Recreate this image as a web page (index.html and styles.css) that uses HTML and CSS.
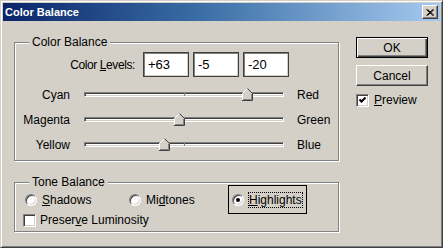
FILE: index.html
```html
<!DOCTYPE html>
<html lang="en">
<head>
  <meta charset="UTF-8">
  <title>Color Balance</title>
  <link rel="stylesheet" href="styles.css">
</head>
<body>
  <div class="window">
    <div class="titlebar">
      <span class="title">Color Balance</span>
      <span class="close">
        <svg width="8" height="7" viewBox="0 0 8 7"><path d="M0.5 0.5 L7 6.5 M1.5 0.5 L8 6.5 M7 0.5 L0.5 6.5 M8 0.5 L1.5 6.5" stroke="#000" stroke-width="1"/></svg>
      </span>
    </div>
    <div class="body">
      <div class="left">
        <div class="group balance">
          <span class="legend">Color Balance</span>
          <div class="levels">
            <span class="levels-label">Color <u>L</u>evels:</span>
            <span class="field">+63</span>
            <span class="field">-5</span>
            <span class="field">-20</span>
          </div>
          <div class="slider-row">
            <span class="slider-left">Cyan</span>
            <div class="track">
              <span class="tick"></span>
              <svg class="thumb" style="left: 157px" width="11" height="13" viewBox="0 0 11 13"><polygon points="5.5,0 11,5.5 11,13 0,13 0,5.5" fill="#d4d0c8"/><polyline points="0.5,12.5 0.5,5.5 5.5,0.5" fill="none" stroke="#fff"/><polyline points="5.5,0.5 10.5,5.5 10.5,12.5 0,12.5" fill="none" stroke="#404040"/><polyline points="9.5,6 9.5,11.5 1,11.5" fill="none" stroke="#808080"/></svg>
            </div>
            <span class="slider-right">Red</span>
          </div>
          <div class="slider-row">
            <span class="slider-left">Magenta</span>
            <div class="track">
              <span class="tick"></span>
              <svg class="thumb" style="left: 89px" width="11" height="13" viewBox="0 0 11 13"><polygon points="5.5,0 11,5.5 11,13 0,13 0,5.5" fill="#d4d0c8"/><polyline points="0.5,12.5 0.5,5.5 5.5,0.5" fill="none" stroke="#fff"/><polyline points="5.5,0.5 10.5,5.5 10.5,12.5 0,12.5" fill="none" stroke="#404040"/><polyline points="9.5,6 9.5,11.5 1,11.5" fill="none" stroke="#808080"/></svg>
            </div>
            <span class="slider-right">Green</span>
          </div>
          <div class="slider-row">
            <span class="slider-left">Yellow</span>
            <div class="track">
              <span class="tick"></span>
              <svg class="thumb" style="left: 74px" width="11" height="13" viewBox="0 0 11 13"><polygon points="5.5,0 11,5.5 11,13 0,13 0,5.5" fill="#d4d0c8"/><polyline points="0.5,12.5 0.5,5.5 5.5,0.5" fill="none" stroke="#fff"/><polyline points="5.5,0.5 10.5,5.5 10.5,12.5 0,12.5" fill="none" stroke="#404040"/><polyline points="9.5,6 9.5,11.5 1,11.5" fill="none" stroke="#808080"/></svg>
            </div>
            <span class="slider-right">Blue</span>
          </div>
        </div>

        <div class="group tone">
          <span class="legend">Tone Balance</span>
          <div class="radios">
            <label class="radio-item"><span class="radio"></span><span class="radio-text"><u>S</u>hadows</span></label>
            <label class="radio-item"><span class="radio"></span><span class="radio-text">Mi<u>d</u>tones</span></label>
            <label class="radio-item selected"><span class="radio checked"></span><span class="radio-text focus"><u>H</u>ighlights</span></label>
          </div>
          <label class="check-item preserve"><span class="checkbox"></span><span>Preser<u>v</u>e Luminosity</span></label>
        </div>
      </div>

      <div class="buttons">
        <div class="btn default">OK</div>
        <div class="btn">Cancel</div>
        <label class="check-item preview">
          <span class="checkbox">
            <svg width="7" height="7" viewBox="0 0 7 7"><polyline points="0.5,2.5 2.5,4.5 6.5,0.5" fill="none" stroke="#000" stroke-width="2"/></svg>
          </span>
          <span><u>P</u>review</span>
        </label>
      </div>
    </div>
  </div>
</body>
</html>
```

FILE: styles.css
```css
body {
  margin: 0;
  background: #d4d0c8;
  font-family: 'Liberation Sans', Arial, sans-serif;
  font-size: 12px;
  line-height: 14px;
  color: #000;
}

.window {
  width: 443px;
  height: 248px;
  box-sizing: border-box;
  border: 1px solid;
  border-color: #d4d0c8 #404040 #404040 #d4d0c8;
  box-shadow: inset 1px 1px #fff, inset -1px -1px #808080;
  padding: 2px;
  background: #d4d0c8;
}

.titlebar {
  height: 18px;
  display: flex;
  align-items: center;
  justify-content: space-between;
  padding: 0 2px 0 2px;
  background: linear-gradient(90deg, #0a246a 0%, #3a6ea5 45%, #a6caf0 100%);
}

.title {
  color: #fff;
  font-weight: bold;
  font-size: 11px;
}

.close {
  width: 16px;
  height: 14px;
  box-sizing: border-box;
  border: 1px solid;
  border-color: #fff #404040 #404040 #fff;
  box-shadow: inset -1px -1px #808080;
  background: #d4d0c8;
  display: flex;
  align-items: center;
  justify-content: center;
}

.body {
  display: flex;
  padding-left: 11px;
}

.left {
  width: 325px;
  margin-top: 21px;
}

/* group boxes */
.group {
  position: relative;
  box-sizing: border-box;
  width: 325px;
  border: 1px solid #808080;
  box-shadow: inset 1px 1px #fff, 1px 1px #fff;
}
.legend {
  position: absolute;
  left: 14px;
  top: -8px;
  padding: 0 3px;
  background: #d4d0c8;
}

.balance {
  height: 119px;
  padding-top: 9px;
}

.levels {
  display: flex;
  align-items: center;
  gap: 4px;
  height: 25px;
}
.levels-label {
  width: 120px;
  text-align: right;
  margin-right: 4px;
  letter-spacing: -0.4px;
}
.field {
  box-sizing: border-box;
  width: 46px;
  height: 25px;
  border: 1px solid #404040;
  box-shadow: inset 1px 1px #808080, inset -1px -1px #d4d0c8;
  background: #fff;
  padding: 5px 0 0 4px;
  font-size: 13px;
}

.slider-row {
  display: flex;
  align-items: center;
  height: 25px;
}
.levels + .slider-row {
  margin-top: 5px;
}
.slider-left {
  width: 55px;
  text-align: right;
  margin-right: 14px;
}
.slider-right {
  margin-left: 13px;
}
.track {
  position: relative;
  box-sizing: border-box;
  width: 200px;
  height: 5px;
  border: 1px solid;
  border-color: #808080 #fff #fff #808080;
  box-shadow: inset 1px 1px #404040, inset -1px -1px #d4d0c8;
  background: #fff;
}
.tick {
  position: absolute;
  left: 99px;
  top: 0;
  width: 1px;
  height: 3px;
  background: #808080;
}
.thumb {
  position: absolute;
  top: -5px;
}

.tone {
  margin-top: 21px;
  height: 50px;
  padding: 2px 0 0 6px;
}

.radios {
  display: grid;
  grid-template-columns: 104px 103px auto;
}
.radio-item {
  display: flex;
  align-items: center;
  gap: 4px;
  height: 29px;
  box-sizing: border-box;
  border: 1px solid transparent;
  padding: 0 3px;
  justify-self: start;
}
.radio-item.selected {
  border-color: #000;
}
.radio {
  width: 12px;
  height: 12px;
  box-sizing: border-box;
  border-radius: 50%;
  border: 1px solid;
  border-color: #808080 #fff #fff #808080;
  box-shadow: inset 1px 1px #404040, inset -1px -1px #d4d0c8;
  background: #fff;
  position: relative;
}
.radio.checked::after {
  content: '';
  position: absolute;
  left: 3px;
  top: 3px;
  width: 4px;
  height: 4px;
  border-radius: 50%;
  background: #000;
}
.radio-text {
  border: 1px dotted transparent;
}
.radio-text.focus {
  border-color: #000;
}

.check-item {
  display: flex;
  align-items: center;
  gap: 5px;
}
.preserve {
  margin-left: 2px;
  gap: 4px;
  height: 12px;
}
.checkbox {
  width: 13px;
  height: 13px;
  box-sizing: border-box;
  border: 1px solid;
  border-color: #808080 #fff #fff #808080;
  box-shadow: inset 1px 1px #404040, inset -1px -1px #d4d0c8;
  background: #fff;
  display: flex;
  align-items: center;
  justify-content: center;
}

.buttons {
  margin-left: 17px;
  margin-top: 16px;
  width: 72px;
}
.btn {
  box-sizing: border-box;
  width: 72px;
  height: 21px;
  border: 1px solid;
  border-color: #fff #404040 #404040 #fff;
  box-shadow: inset -1px -1px #808080;
  display: flex;
  align-items: center;
  justify-content: center;
  margin-bottom: 7px;
}
.btn.default {
  border-color: #000;
  box-shadow: inset 1px 1px #fff, inset -1px -1px #404040, inset -2px -2px #808080;
}
.preview {
  margin-top: 7px;
}
```
